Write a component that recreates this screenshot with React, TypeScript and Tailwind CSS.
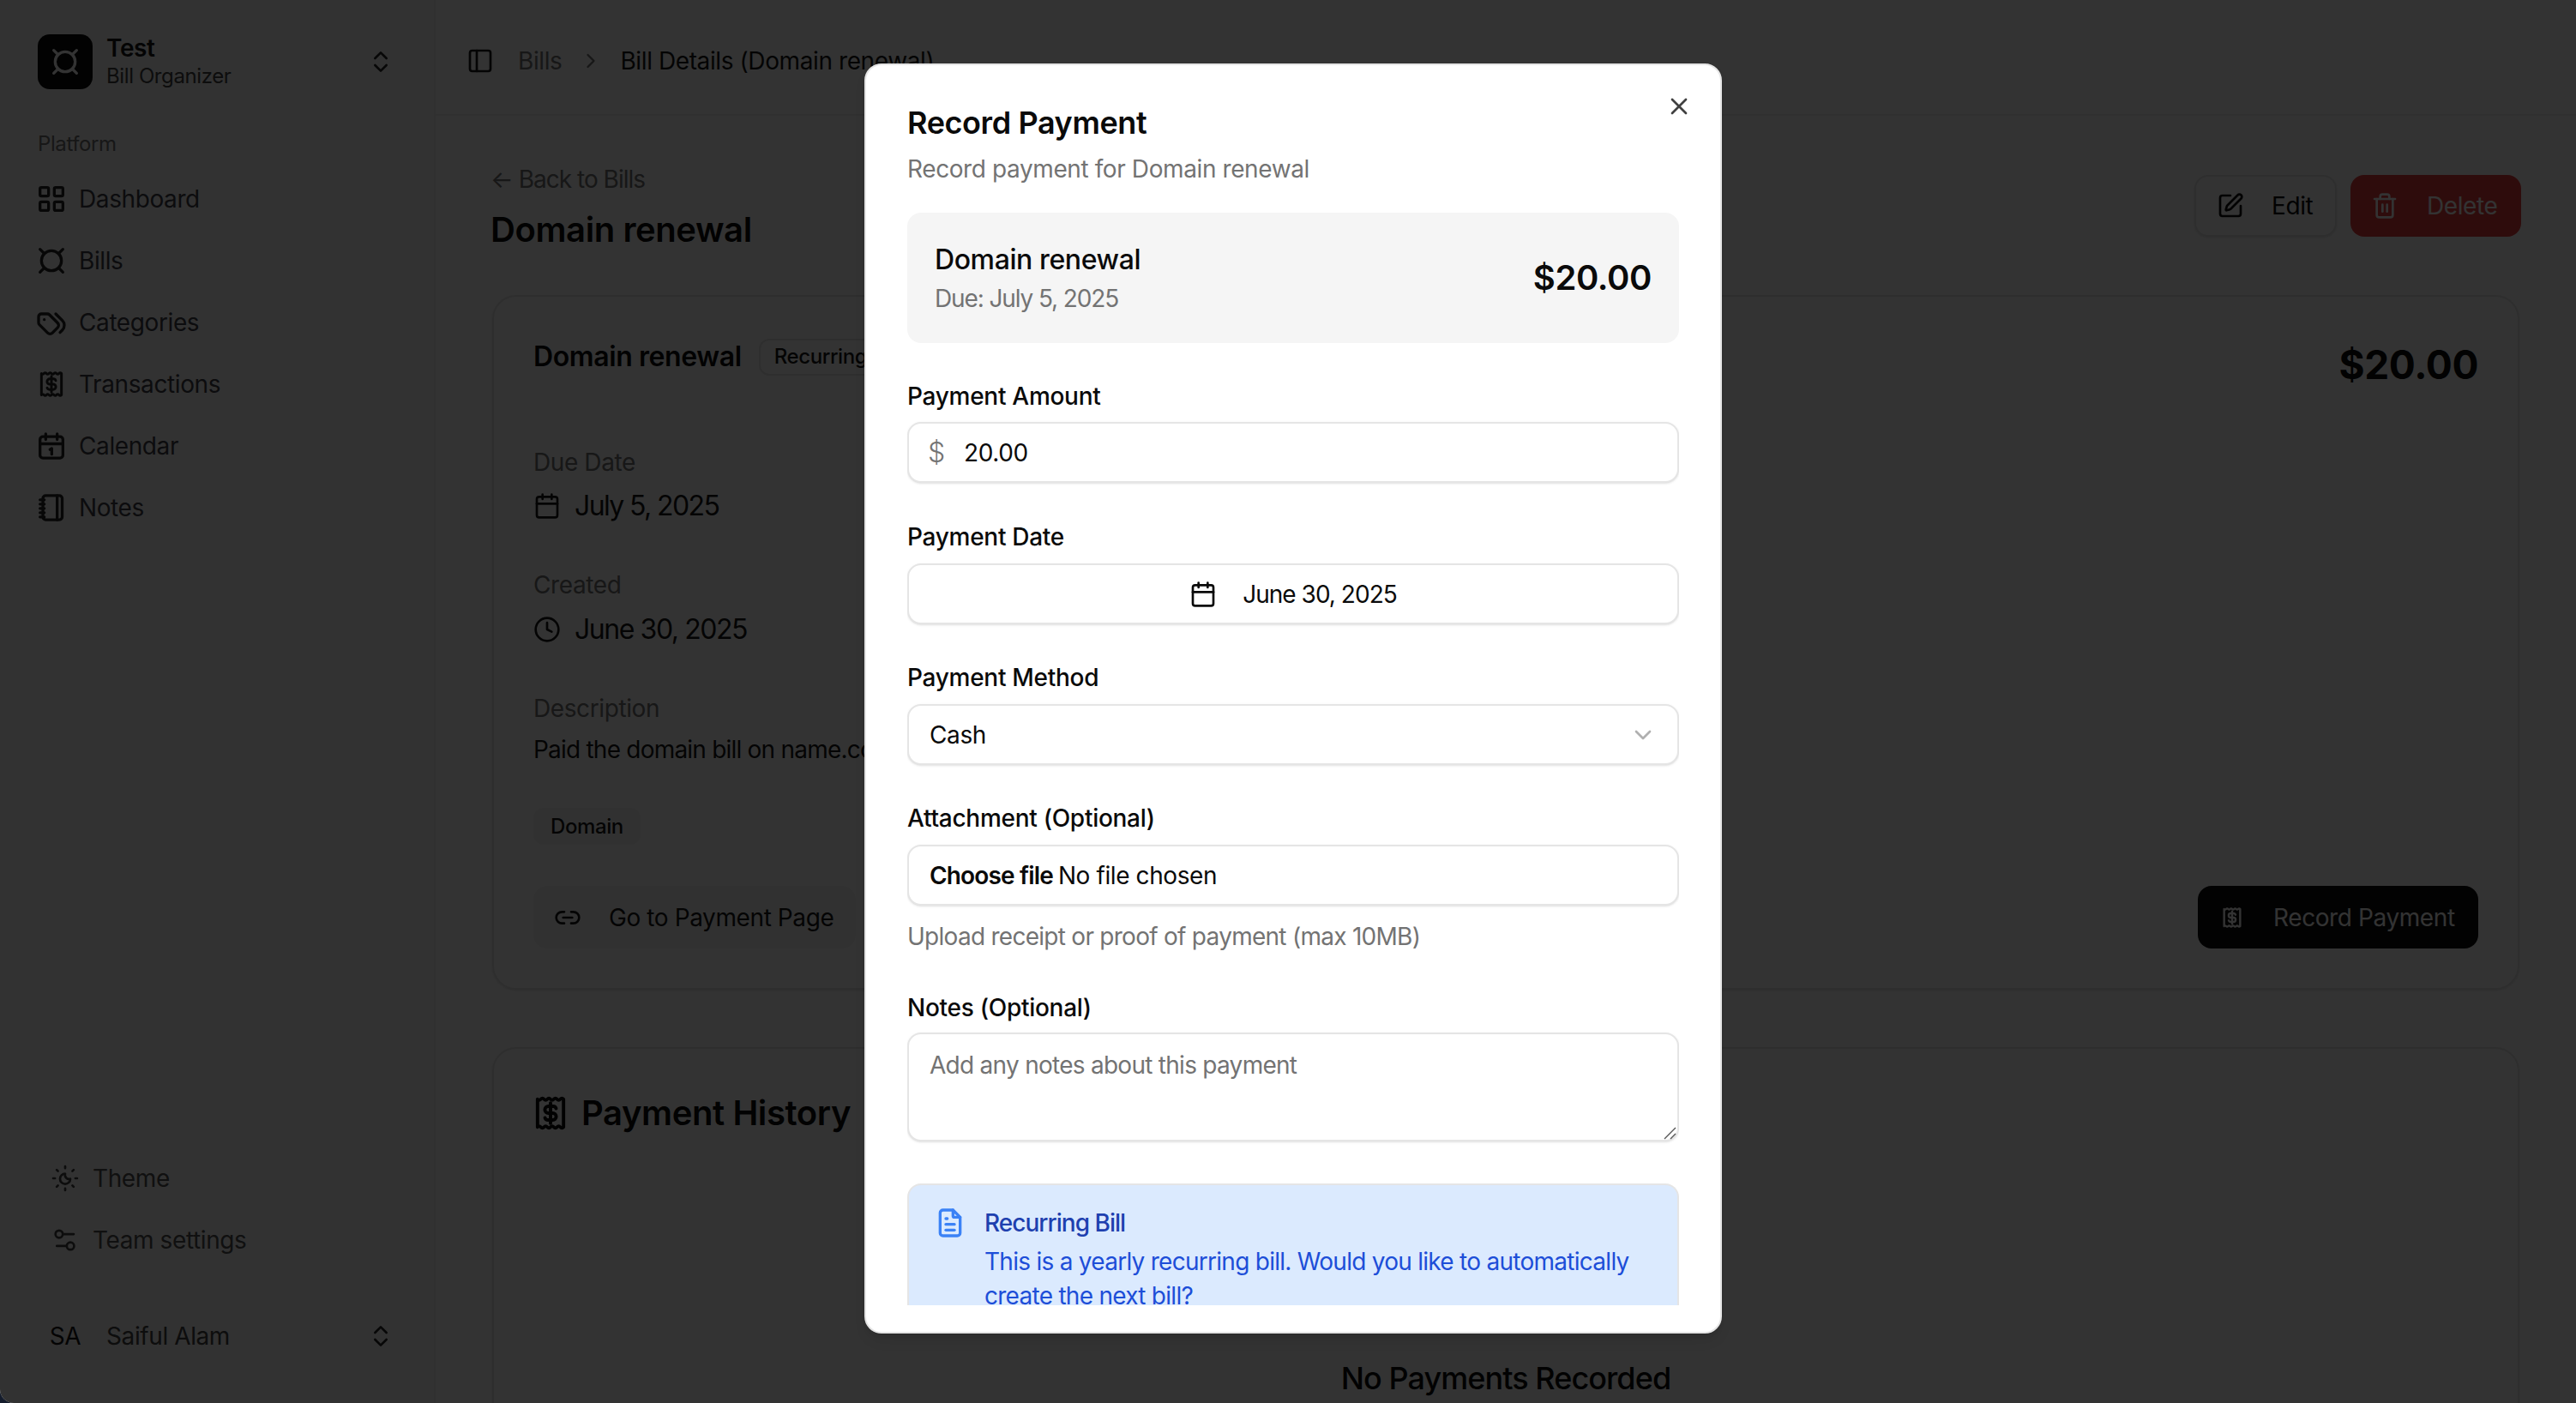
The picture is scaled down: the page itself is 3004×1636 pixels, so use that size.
import React from "react";
import { ChevronsUpDown, PanelLeft, ChevronRight, Calendar, Clock, Link2, SquarePen, Trash2, X, ChevronDown } from "lucide-react";
import { TbFileText, TbTags } from "react-icons/tb";

type P = { className?: string };
const svg = { xmlns: "http://www.w3.org/2000/svg", viewBox: "0 0 24 24", fill: "none", stroke: "currentColor", strokeWidth: 2, strokeLinecap: "round" as const, strokeLinejoin: "round" as const };

const GridIcon = ({ className }: P) => (
  <svg {...svg} className={className}>
    <rect x="4" y="4" width="6" height="6" rx="1" /><rect x="14" y="4" width="6" height="6" rx="1" />
    <rect x="4" y="14" width="6" height="6" rx="1" /><rect x="14" y="14" width="6" height="6" rx="1" />
  </svg>
);
const CurrencyIcon = ({ className }: P) => (
  <svg {...svg} className={className}>
    <circle cx="12" cy="12" r="7" />
    <path d="M4 4l3 3M20 4l-3 3M4 20l3-3M20 20l-3-3" />
  </svg>
);
const ReceiptDollarIcon = ({ className }: P) => (
  <svg {...svg} className={className}>
    <path d="M5 4.5q.875 1 1.75 0t1.75 0t1.75 0t1.75 0t1.75 0t1.75 0t1.75 0t1.75 0V19.5q-.875 1-1.75 0t-1.75 0t-1.75 0t-1.75 0t-1.75 0t-1.75 0t-1.75 0t-1.75 0Z" strokeWidth="1.8" />
    <path d="M15 9.5a1.7 1.7 0 0 0-1.6-1.2h-2.6a1.85 1.85 0 0 0 0 3.7h2.4a1.85 1.85 0 0 1 0 3.7h-2.6A1.7 1.7 0 0 1 9 14.5M12 6.5v11" strokeWidth="1.8" />
  </svg>
);
const CalendarOneIcon = ({ className }: P) => (
  <svg {...svg} className={className}>
    <rect x="4" y="5.5" width="16" height="15" rx="2" />
    <path d="M8 3.5v4M16 3.5v4M4 10.5h16M11 14.5l1.2-.7v4" />
  </svg>
);
const NotebookIcon = ({ className }: P) => (
  <svg {...svg} className={className}>
    <rect x="6" y="3.5" width="13.5" height="17" rx="2" />
    <path d="M16 3.5v17M4 6.5h3M4 9.5h3M4 12.5h3M4 15.5h3M4 18.5h3" />
  </svg>
);
const SunMoonIcon = ({ className }: P) => (
  <svg {...svg} className={className}>
    <path d="M12 8a4.5 4.5 0 1 0 4.5 4.5A3.6 3.6 0 0 1 12 8z" />
    <path d="M12 1.5v1.6M12 20.9v1.6M1.5 12h1.6M20.9 12h1.6M4.6 4.6l1.1 1.1M18.3 18.3l1.1 1.1M19.4 4.6l-1.1 1.1M5.7 18.3l-1.1 1.1" />
  </svg>
);
const SlidersIcon = ({ className }: P) => (
  <svg {...svg} className={className}>
    <circle cx="6.7" cy="6.8" r="3.2" />
    <path d="M10 6.8h9.5M4.7 17.2h8.6" />
    <circle cx="16.6" cy="17.2" r="3.2" />
  </svg>
);

const nav: [string, React.ComponentType<P>][] = [
  ["Dashboard", GridIcon],
  ["Bills", CurrencyIcon],
  ["Categories", TbTags as unknown as React.ComponentType<P>],
  ["Transactions", ReceiptDollarIcon],
  ["Calendar", CalendarOneIcon],
  ["Notes", NotebookIcon],
];

function Sidebar() {
  return (
    <aside className="w-[508px] h-full shrink-0 flex flex-col bg-[#fafafa] border-r-2 border-[#f0f0f0] text-[#3f3f46]">
      <div className="flex items-center pt-10 pl-11 pr-[46px]">
        <div className="w-16 h-16 rounded-[14px] bg-[#0a0a0a] flex items-center justify-center text-white">
          <CurrencyIcon className="w-10 h-10" />
        </div>
        <div className="ml-4 flex flex-col -mt-[2px]">
          <span className="text-[28px] leading-[36px] font-semibold text-[#171717]">Test</span>
          <span className="text-[24px] leading-[30px] text-[#404040]">Bill Organizer</span>
        </div>
        <ChevronsUpDown className="ml-auto w-8 h-8 text-[#262626]" />
      </div>
      <div className="mt-12 pl-11 text-[24px] leading-8 text-[#737373]">Platform</div>
      <nav className="mt-3 flex flex-col">
        {nav.map(([label, Icon]) => (
          <div key={label} className="h-[72px] pl-10 flex items-center gap-3 text-[28px]">
            <Icon className="w-10 h-10 shrink-0 text-[#262626]" />
            <span>{label}</span>
          </div>
        ))}
      </nav>
      <div className="mt-auto flex flex-col">
        <div className="h-[72px] pl-[60px] flex items-center gap-4 text-[28px] text-[#525252]">
          <SunMoonIcon className="w-8 h-8 text-[#404040]" /><span>Theme</span>
        </div>
        <div className="h-[72px] pl-[60px] flex items-center gap-4 text-[28px] text-[#525252]">
          <SlidersIcon className="w-8 h-8 text-[#404040]" /><span>Team settings</span>
        </div>
      </div>
      <div className="mt-11 mb-[46px] pl-11 pr-[46px] flex items-center">
        <div className="w-16 h-16 rounded-[14px] flex items-center justify-center text-[28px] text-[#171717]">SA</div>
        <span className="ml-4 text-[28px] text-[#404040]">Saiful Alam</span>
        <ChevronsUpDown className="ml-auto w-8 h-8 text-[#262626]" />
      </div>
    </aside>
  );
}

function Main() {
  return (
    <main className="flex-1 min-w-0 h-full flex flex-col bg-white">
      <header className="h-[135px] shrink-0 border-b-2 border-[#f0f0f0] pt-2 pl-9 flex items-center text-[28px]">
        <PanelLeft className="w-8 h-8 text-[#171717]" />
        <span className="ml-7 text-[#737373]">Bills</span>
        <ChevronRight className="ml-5 w-7 h-7 text-[#737373]" />
        <span className="ml-5 text-[#171717]">Bill Details (Domain renewal)</span>
      </header>
      <div className="flex-1 min-h-0 px-[66px] pt-[54px]">
        <div className="flex items-start justify-between">
          <div className="-ml-[2px]">
            <div className="text-[28px] leading-10 text-[#737373] tracking-[-0.035em]">← Back to Bills</div>
            <h1 className="mt-[11px] text-[40px] leading-[56px] font-semibold text-[#0a0a0a]">Domain renewal</h1>
          </div>
          <div className="mt-[15px] -mr-[2px] flex gap-4 text-[28px]">
            <button className="h-[72px] w-[166px] rounded-[16px] border-2 border-[#e5e5e5] shadow-sm pl-6 flex items-center gap-8 text-[#0a0a0a]">
              <SquarePen className="w-8 h-8 shrink-0" /><span>Edit</span>
            </button>
            <button className="h-[72px] w-[199px] rounded-[16px] bg-[#e63c3c] pl-[24px] flex items-center gap-[33px] text-white">
              <Trash2 className="w-8 h-8 shrink-0" /><span>Delete</span>
            </button>
          </div>
        </div>
        <section className="mt-12 rounded-[28px] border-2 border-[#e5e5e5] shadow-sm px-[46px] pt-[48px] h-[810px]">
          <div className="flex justify-between items-start">
            <div className="flex items-center gap-[20px]">
              <h2 className="text-[32px] leading-[44px] font-semibold text-[#0a0a0a]">Domain renewal</h2>
              <span className="h-[43px] px-[16px] flex items-center rounded-[12px] border-2 border-[#e5e5e5] text-[24px] font-medium text-[#171717]">Recurring</span>
            </div>
            <div className="text-[46px] leading-[62px] font-bold text-[#0a0a0a]">$20.00</div>
          </div>
          <div className="mt-[63px] text-[28px] leading-10 text-[#737373]">Due Date</div>
          <div className="mt-[7px] flex items-center gap-[16px] text-[32px] leading-[48px] text-[#171717] tracking-[-0.05em]">
            <Calendar className="w-8 h-8" /><span>July 5, 2025</span>
          </div>
          <div className="mt-12 text-[28px] leading-10 text-[#737373]">Created</div>
          <div className="mt-2 flex items-center gap-[16px] text-[32px] leading-[48px] text-[#171717] tracking-[-0.045em]">
            <Clock className="w-8 h-8" /><span>June 30, 2025</span>
          </div>
          <div className="mt-12 text-[28px] leading-10 text-[#737373]">Description</div>
          <div className="mt-2 text-[28px] leading-10 text-[#171717] tracking-[-0.028em]">Paid the domain bill on name.com</div>
          <div className="mt-12 flex">
            <span className="h-[43px] px-[20px] flex items-center rounded-[12px] bg-[#f5f5f5] text-[24px] font-medium text-[#171717]">Domain</span>
          </div>
          <div className="mt-12 flex justify-between">
            <button className="h-[73px] w-[376px] rounded-[16px] bg-[#f5f5f5] pl-6 flex items-center gap-[32px] text-[28px] text-[#171717]">
              <Link2 className="w-8 h-8 shrink-0" /><span>Go to Payment Page</span>
            </button>
            <button className="h-[73px] w-[327px] rounded-[16px] bg-[#0a0a0a] pl-6 flex items-center gap-[32px] text-[28px] text-white">
              <ReceiptDollarIcon className="w-8 h-8 shrink-0" /><span>Record Payment</span>
            </button>
          </div>
        </section>
        <section className="mt-[67px] rounded-[28px] border-2 border-[#e5e5e5] shadow-sm px-[46px] pt-[47px] h-[700px]">
          <div className="flex items-center gap-[10px] -ml-[6px]">
            <ReceiptDollarIcon className="w-[52px] h-[52px] text-[#0a0a0a]" />
            <h2 className="text-[40px] leading-[56px] font-semibold text-[#0a0a0a]">Payment History</h2>
          </div>
          <div className="mt-[257px] text-center text-[36px] leading-[48px] font-medium text-[#0a0a0a] tracking-[-0.026em]">No Payments Recorded</div>
        </section>
      </div>
    </main>
  );
}

const fieldClass = "h-[71px] rounded-[16px] border-2 border-[#e5e5e5] bg-white shadow-sm flex items-center text-[28px] text-[#0a0a0a]";
const Label = ({ children, className }: { children: React.ReactNode; className: string }) => (
  <label className={`block text-[28px] leading-9 font-medium text-[#0a0a0a] tracking-[-0.01em] ${className}`}>{children}</label>
);

function Modal() {
  return (
    <div className="relative w-[1000px] h-[1481px] rounded-[20px] border-2 border-[#e5e5e5] bg-white shadow-lg flex flex-col pb-[31px] px-12">
      <button className="absolute top-[32px] right-[32px] text-[#404040]"><X className="w-8 h-8" /></button>
      <div className="flex-1 min-h-0 overflow-hidden pt-[45px]">
        <h2 className="text-[36px] leading-[44px] font-semibold text-[#0a0a0a]">Record Payment</h2>
        <p className="mt-3 text-[28px] leading-10 text-[#737373]">Record payment for Domain renewal</p>
        <div className="mt-[31px] h-[152px] rounded-[16px] bg-[#f5f5f5] px-8 flex items-center justify-between">
          <div>
            <div className="text-[32px] leading-[44px] font-medium text-[#0a0a0a]">Domain renewal</div>
            <div className="mt-[3px] text-[28px] leading-10 text-[#737373] tracking-[-0.04em]">Due: July 5, 2025</div>
          </div>
          <div className="text-[40px] leading-[56px] font-semibold text-[#0a0a0a]">$20.00</div>
        </div>
        <Label className="mt-[44px]">Payment Amount</Label>
        <div className={`mt-3 ${fieldClass} pl-[22px]`}>
          <span className="text-[#737373] text-[32px] font-light w-[42px]">$</span>
          <input readOnly value="20.00" className="flex-1 outline-none bg-transparent" />
        </div>
        <Label className="mt-[45px]">Payment Date</Label>
        <button className={`mt-[13px] w-full justify-center gap-[30px] tracking-[-0.035em] ${fieldClass}`}>
          <Calendar className="w-8 h-8" /><span>June 30, 2025</span>
        </button>
        <Label className="mt-[44px]">Payment Method</Label>
        <div className={`mt-[13px] justify-between pl-6 pr-6 ${fieldClass}`}>
          <span>Cash</span>
          <ChevronDown className="w-8 h-8 text-[#b0b0b0]" />
        </div>
        <Label className="mt-[44px]">Attachment (Optional)</Label>
        <div className={`mt-[13px] pl-6 ${fieldClass}`}>
          <span className="font-semibold tracking-[-0.03em]">Choose file</span>
          <span className="ml-[6px]">No file chosen</span>
        </div>
        <p className="mt-4 text-[28px] leading-10 text-[#737373] tracking-[-0.026em]">Upload receipt or proof of payment (max 10MB)</p>
        <Label className="mt-[45px]">Notes (Optional)</Label>
        <div className="relative mt-[11px]">
          <textarea
            placeholder="Add any notes about this payment"
            className="block w-full h-[127px] resize-none rounded-[16px] border-2 border-[#e5e5e5] bg-white shadow-sm px-6 py-[18px] text-[28px] leading-9 tracking-[-0.026em] outline-none placeholder:text-[#737373]"
          />
          <svg className="absolute right-[2px] bottom-[2px] w-4 h-4 text-[#555]" viewBox="0 0 16 16" fill="none" stroke="currentColor" strokeWidth="1.4">
            <path d="M1 15L14 2M8 15l6-6" />
          </svg>
        </div>
        <div className="mt-[49px] h-[260px] rounded-[16px] border-2 border-[#e5e5e5] border-b-0 bg-[#dbeafe] pl-7 pt-6 flex gap-5">
          <TbFileText className="w-10 h-10 shrink-0 text-[#3b82f6]" />
          <div>
            <div className="text-[28px] leading-10 font-medium text-[#1e40af] tracking-[-0.035em]">Recurring Bill</div>
            <div className="mt-[5px] w-[775px] text-[28px] leading-10 text-[#1d4ed8] tracking-[-0.026em]">This is a yearly recurring bill. Would you like to automatically create the next bill?</div>
          </div>
        </div>
      </div>
    </div>
  );
}

export default function App() {
  return (
    <div className="w-[3004px] h-[1636px] bg-[#141c2c] font-['Inter',sans-serif] tracking-[-0.025em]">
      <div className="relative w-full h-full flex overflow-hidden rounded-bl-[16px]">
        <Sidebar />
        <Main />
        <div className="absolute inset-0 bg-black/80 flex justify-center pt-[74px] pl-3">
          <Modal />
        </div>
      </div>
    </div>
  );
}
